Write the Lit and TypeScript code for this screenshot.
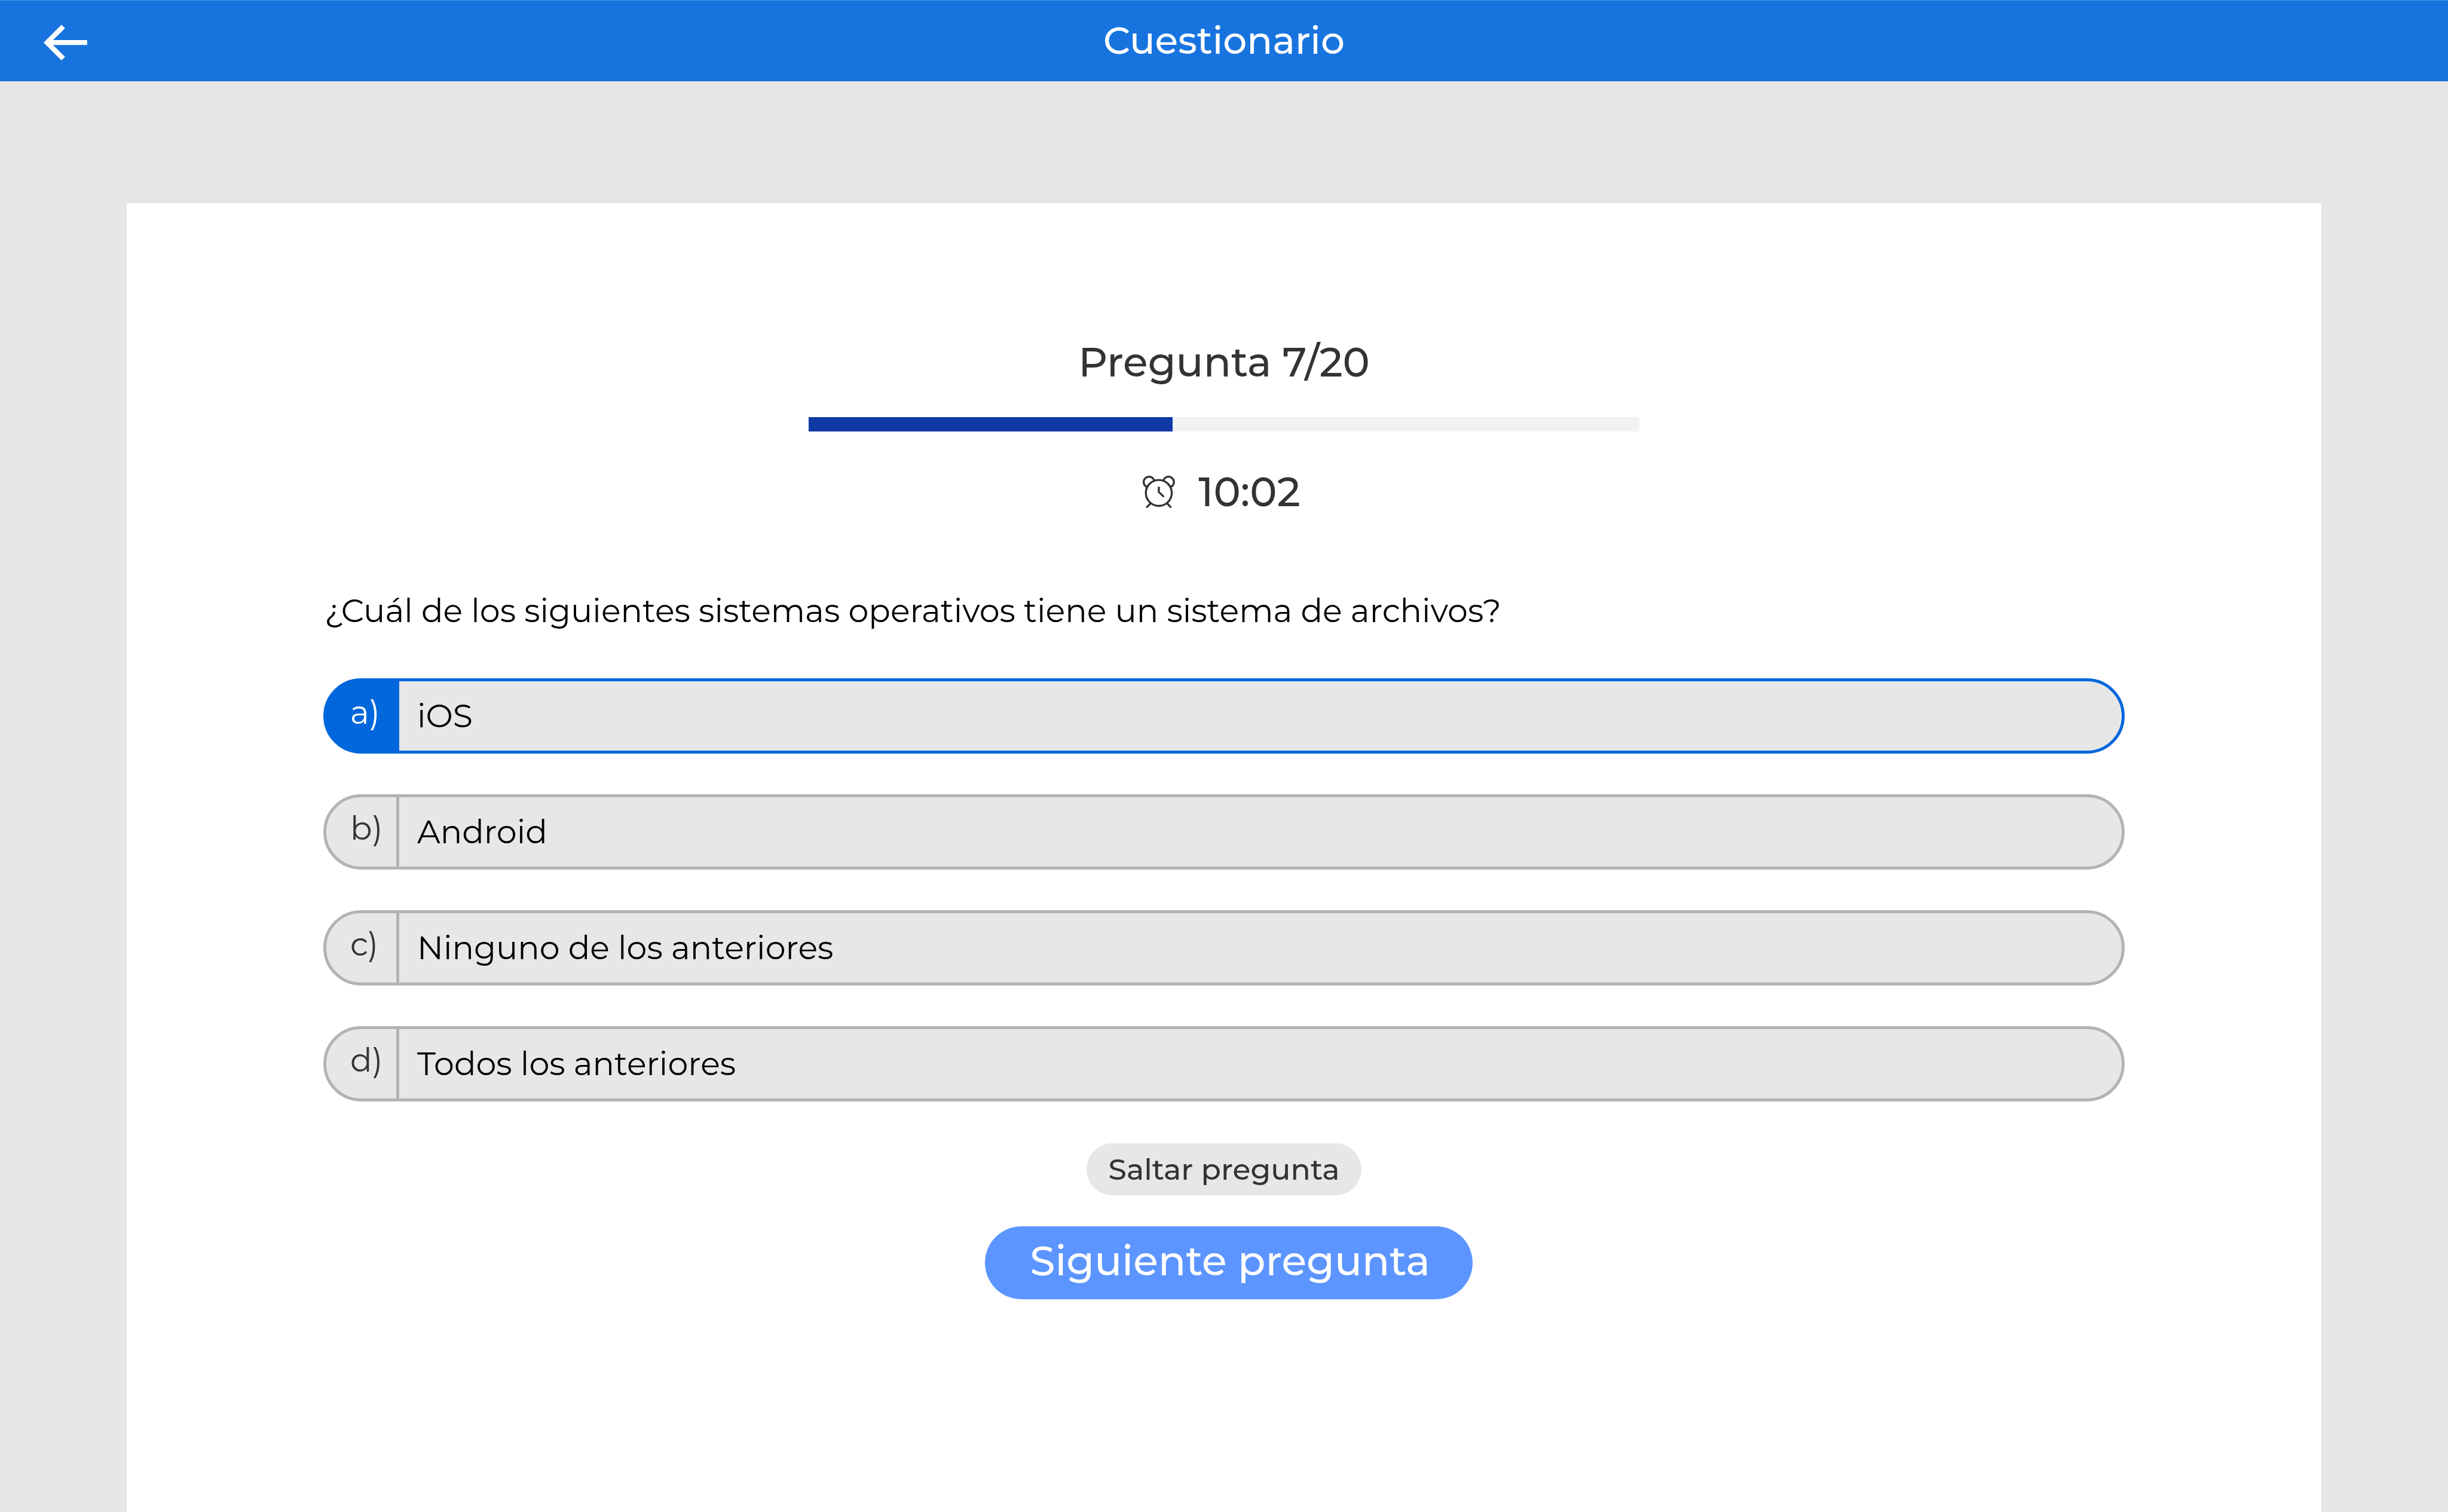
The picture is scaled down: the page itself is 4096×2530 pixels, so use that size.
import { LitElement, html, css } from "lit";
import { customElement, state } from "lit/decorators.js";
import { classMap } from "lit/directives/class-map.js";

interface Answer {
  key: string;
  text: string;
}

const ANSWERS: Answer[] = [
  { key: "a", text: "iOS" },
  { key: "b", text: "Android" },
  { key: "c", text: "Ninguno de los anteriores" },
  { key: "d", text: "Todos los anteriores" },
];

@customElement("quiz-header")
class QuizHeader extends LitElement {
  static styles = css`
    :host {
      display: block;
    }
    .bar {
      box-sizing: border-box;
      display: grid;
      grid-template-columns: 1fr auto 1fr;
      align-items: center;
      height: 136px;
      padding: 0 73px;
      background: #1774de;
      box-shadow: inset 0 1px #4a93e5;
      color: #fff;
    }
    .back {
      justify-self: start;
      display: flex;
      padding: 0;
      border: 0;
      background: none;
      color: inherit;
      cursor: pointer;
    }
    .arrow {
      width: 73px;
      height: 66px;
      fill: currentColor;
    }
    .title {
      margin: 0;
      font-size: 63px;
      font-weight: 500;
      line-height: 84px;
    }
  `;

  render() {
    return html`
      <header class="bar">
        <button class="back" type="button" aria-label="Volver">
          <svg class="arrow" viewBox="387 187 390 352" aria-hidden="true">
            <path d="M387 380 546 222 579 252 471 358H776V402H471L579 509 546 539Z" />
          </svg>
        </button>
        <h1 class="title">Cuestionario</h1>
      </header>
    `;
  }
}

@customElement("app-root")
class AppRoot extends LitElement {
  static styles = css`
    :host {
      display: flex;
      flex-direction: column;
      min-height: 100vh;
      background: #e6e6e6;
      color: #333;
      font-family: Montserrat, Inter, "Noto Sans", sans-serif;
    }
    .card {
      box-sizing: border-box;
      flex: 1;
      display: flex;
      flex-direction: column;
      align-items: center;
      margin: 204px 212px 0;
      padding: 224px 329px 120px;
      background: #fff;
    }
    .count,
    .timer {
      margin: 0;
      font-size: 68px;
      font-weight: 500;
      line-height: 84px;
    }
    .track {
      width: 1390px;
      max-width: 100%;
      height: 24px;
      margin: 50px 0 59px;
      background: #f2f2f2;
    }
    .fill {
      height: 100%;
      background: #1039a6;
    }
    .timer {
      display: flex;
      align-items: center;
      gap: 39px;
      padding-right: 8px;
    }
    .clock {
      width: 54px;
      height: 54px;
      fill: none;
      stroke: currentColor;
      stroke-width: 18;
      stroke-linecap: round;
      stroke-linejoin: round;
    }
    .quiz {
      align-self: stretch;
      margin: 124px 0 70px;
    }
    .question {
      margin: 0 0 80px;
      padding-left: 2px;
      color: #000;
      font-size: 54px;
      font-weight: 400;
      line-height: 66px;
    }
    .options {
      display: flex;
      flex-direction: column;
      gap: 68px;
    }
    .option {
      position: relative;
      box-sizing: border-box;
      display: flex;
      height: 126px;
      border: 5px solid #b3b3b3;
      border-radius: 63px;
      background: #e7e7e7;
      font-size: 54px;
      line-height: 66px;
      cursor: pointer;
    }
    .radio {
      position: absolute;
      inset: 0;
      margin: 0;
      appearance: none;
      border-radius: 63px;
      cursor: pointer;
    }
    .letter {
      box-sizing: border-box;
      display: flex;
      align-items: center;
      width: 122px;
      padding: 0 0 12px 40px;
      border-right: 5px solid #b3b3b3;
    }
    .answer {
      align-self: center;
      padding-left: 30px;
      color: #000;
    }
    .selected {
      border-color: #0067dd;
      background: linear-gradient(90deg, #0067dd 122px, #e7e7e7 122px);
    }
    .selected .letter {
      border-color: #0067dd;
      color: #fff;
    }
    .skip,
    .next {
      border: 0;
      border-radius: 61px;
      font-family: inherit;
      font-weight: 500;
      cursor: pointer;
    }
    .skip {
      height: 87px;
      padding: 0 36px;
      background: #e7e7e7;
      color: #333;
      font-size: 49px;
    }
    .next {
      height: 122px;
      margin: 52px 0 0 16px;
      padding: 0 71px 8px 75px;
      background: #5c95ff;
      color: #fff;
      font-size: 68px;
    }
  `;

  @state() private selected = "a";

  private progress = 43.8;

  render() {
    return html`
      <quiz-header></quiz-header>
      <main class="card">
        <h2 class="count">Pregunta 7/20</h2>
        <div
          class="track"
          role="progressbar"
          aria-label="Progreso"
          aria-valuenow="7"
          aria-valuemax="20"
        >
          <div class="fill" style="width:${this.progress}%"></div>
        </div>
        <p class="timer">
          <svg class="clock" viewBox="156 98 289 289" aria-hidden="true">
            <circle cx="300" cy="252" r="116" />
            <path d="M190 197A48 48 0 1 1 257 136M410 197A48 48 0 1 0 343 136" />
            <path d="M300 203V243L340 282M225 347 194 378M375 347 406 378" />
          </svg>
          <span>10:02</span>
        </p>
        <section class="quiz">
          <h3 class="question" id="question">
            ¿Cuál de los siguientes sistemas operativos tiene un sistema de archivos?
          </h3>
          <div class="options" role="radiogroup" aria-labelledby="question">
            ${ANSWERS.map((a) => this.option(a))}
          </div>
        </section>
        <button class="skip" type="button">Saltar pregunta</button>
        <button class="next" type="button">Siguiente pregunta</button>
      </main>
    `;
  }

  private option(a: Answer) {
    const on = a.key === this.selected;
    return html`
      <label class=${classMap({ option: true, selected: on })}>
        <input
          class="radio"
          type="radio"
          name="answer"
          value=${a.key}
          .checked=${on}
          @change=${() => (this.selected = a.key)}
        />
        <span class="letter">${a.key})</span>
        <span class="answer">${a.text}</span>
      </label>
    `;
  }
}
